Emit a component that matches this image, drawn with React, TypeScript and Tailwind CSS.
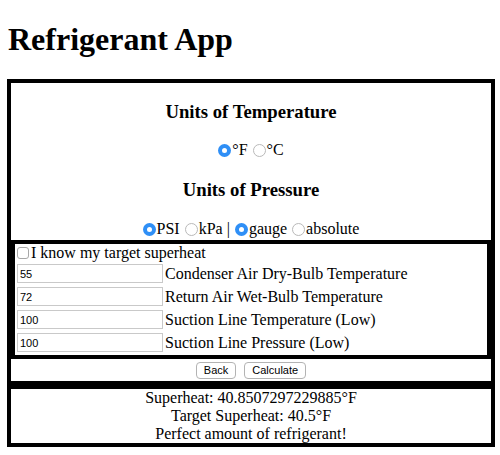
import { useState } from "react"

const fields = [
  { id: "cadb", value: "55", label: "Condenser Air Dry-Bulb Temperature" },
  { id: "rawb", value: "72", label: "Return Air Wet-Bulb Temperature" },
  { id: "slt", value: "100", label: "Suction Line Temperature (Low)" },
  { id: "slp", value: "100", label: "Suction Line Pressure (Low)" },
]

function Radio({ checked, label, onClick }: { checked: boolean; label: string; onClick: () => void }) {
  return (
    <span className="flex cursor-default items-center" onClick={onClick}>
      {checked ? (
        <span className="flex h-[13px] w-[13px] shrink-0 items-center justify-center rounded-full bg-[#2f8ff6]">
          <span className="h-[5px] w-[5px] rounded-full bg-white" />
        </span>
      ) : (
        <span className="h-[13px] w-[13px] shrink-0 rounded-full border border-[#b9b9b9] bg-white" />
      )}
      <span className="ml-[1px] mr-[5px]">{label}</span>
    </span>
  )
}

export default function App() {
  const [tempUnit, setTempUnit] = useState("F")
  const [pressUnit, setPressUnit] = useState("PSI")
  const [pressMode, setPressMode] = useState("gauge")
  const [knowTarget, setKnowTarget] = useState(false)

  return (
    <div className="min-h-screen bg-white font-['Liberation_Serif','Times_New_Roman',serif] text-[16px] text-black">
      <h1 className="ml-2 mt-[21px] mb-[21px] text-[32px] font-bold leading-[37px]">Refrigerant App</h1>

      {/* Settings + inputs */}
      <div className="ml-[7px] w-[488px] border-4 border-black">
        <div className="h-[157px] text-center">
          <h3 className="pt-[18px] text-[18.72px] font-bold leading-[22px]">Units of Temperature</h3>
          <div className="mt-[18px] flex h-[18px] items-center justify-center pl-[5px]">
            <Radio checked={tempUnit === "F"} label="°F" onClick={() => setTempUnit("F")} />
            <Radio checked={tempUnit === "C"} label="°C" onClick={() => setTempUnit("C")} />
          </div>
          <h3 className="mt-[20px] text-[18.72px] font-bold leading-[22px]">Units of Pressure</h3>
          <div className="mt-[19px] flex h-[18px] items-center justify-center pl-[5px]">
            <Radio checked={pressUnit === "PSI"} label="PSI" onClick={() => setPressUnit("PSI")} />
            <Radio checked={pressUnit === "kPa"} label="kPa |" onClick={() => setPressUnit("kPa")} />
            <Radio checked={pressMode === "gauge"} label="gauge" onClick={() => setPressMode("gauge")} />
            <Radio checked={pressMode === "absolute"} label="absolute" onClick={() => setPressMode("absolute")} />
          </div>
        </div>

        <div className="border-4 border-black bg-white pb-[1px]">
          <label className="flex h-[18px] items-center">
            <input
              type="checkbox"
              checked={knowTarget}
              onChange={(e) => setKnowTarget(e.target.checked)}
              className="ml-[2px] h-[12px] w-[12px] appearance-none rounded-[3px] border border-[#a8a8a8] bg-white checked:bg-[#2f8ff6]"
            />
            <span className="ml-[2px]">I know my target superheat</span>
          </label>
          {fields.map((f) => (
            <div key={f.id} className="flex h-[23px] items-center">
              <input
                type="text"
                defaultValue={f.value}
                className="ml-[2px] h-[19px] w-[146px] border border-[#c9c9c9] px-[2px] font-['Liberation_Sans',Arial,sans-serif] text-[11px] text-black outline-none"
              />
              <span className="ml-[2px]">{f.label}</span>
            </div>
          ))}
        </div>

        <div className="flex h-[22px] items-center justify-center gap-[8px]">
          <button className="h-[17px] rounded-[4px] border border-[#b3b3b3] bg-white px-[7px] font-['Liberation_Sans',Arial,sans-serif] text-[11px] leading-none text-black">
            Back
          </button>
          <button className="h-[17px] rounded-[4px] border border-[#b3b3b3] bg-white px-[7px] font-['Liberation_Sans',Arial,sans-serif] text-[11px] leading-none text-black">
            Calculate
          </button>
        </div>
      </div>

      {/* Results */}
      <div className="ml-[7px] w-[488px] border-4 border-black text-center leading-[18px]">
        <div>Superheat: 40.8507297229885°F</div>
        <div>Target Superheat: 40.5°F</div>
        <div>Perfect amount of refrigerant!</div>
      </div>
    </div>
  )
}
